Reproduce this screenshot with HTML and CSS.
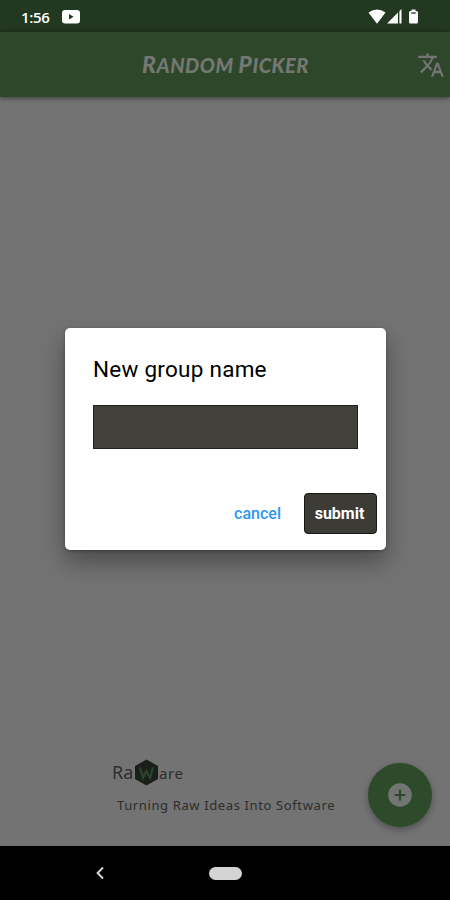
FILE: index.html
```html
<!DOCTYPE html>
<html lang="en">
<head>
    <meta charset="UTF-8">
    <meta name="viewport" content="width=device-width, initial-scale=1.0">
    <title>Random Picker</title>
    <link rel="stylesheet" href="styles.css">
</head>
<body>
    <div class="status-bar">
        <span class="clock">1:56</span>
        <svg class="video-icon" width="18" height="14" viewBox="0 0 18 14">
            <rect width="18" height="13.5" rx="3" fill="#fff"/>
            <path d="M7 4v5.4l4.6-2.7z" fill="#233820"/>
        </svg>
        <svg class="system-icons" width="54" height="18" viewBox="0 0 54 18" fill="#fff">
            <path d="M0.5 4.5Q9 -1.5 17.5 4.5L9 15.8z"/>
            <path d="M33.5 1v14.5H19z"/>
            <path d="M30.7 3v13" stroke="#233820" stroke-width="1.4"/>
            <path d="M43.5 1.5h4v1.4h1q1.5 0 1.5 1.5v9.7q0 1.5-1.5 1.5h-6q-1.5 0-1.5-1.5V4.4q0-1.5 1.5-1.5h1z"/>
            <path d="M43.2 5h4.6" stroke="#233820" stroke-width="1.3"/>
        </svg>
    </div>

    <div class="header">
        <h1 class="app-title"><span class="initial">R</span>andom <span class="initial">P</span>icker</h1>
        <!-- Language switch -->
        <svg class="translate-icon" width="28" height="28" viewBox="0 0 24 24" fill="#737573">
            <path d="M12.87 15.07l-2.54-2.51.03-.03c1.74-1.94 2.98-4.17 3.71-6.53H17V4h-7V2H8v2H1v1.99h11.17C11.5 7.92 10.44 9.75 9 11.35 8.07 10.32 7.3 9.19 6.69 8h-2c.73 1.63 1.73 3.17 2.98 4.56l-5.09 5.02L4 19l5-5 3.11 3.11.76-2.04zM18.5 10h-2L12 22h2l1.12-3h4.75L21 22h2l-4.5-12zm-2.62 7l1.62-4.33L19.12 17h-3.24z"/>
        </svg>
    </div>

    <div class="content">
        <div class="footer">
            <div class="brand">
                <span class="brand-start">Ra</span>
                <svg class="brand-mark" width="25" height="27" viewBox="0 0 25 27">
                    <path d="M12.500 0.500L24 7v13l-11.500 6.500L1 20V7z" fill="#1b1f1a"/>
                    <path d="M6 8.500l3 10.500 3.500-7 3.500 7 3-10.500" fill="none" stroke="#2a432e" stroke-width="2.200"/>
                </svg>
                <span class="brand-end">are</span>
            </div>
            <div class="tagline">Turning Raw Ideas Into Software</div>
        </div>
        <button class="add-button" aria-label="Add group">
            <svg width="24" height="24" viewBox="0 0 24 24">
                <circle cx="12" cy="12" r="11.800" fill="#737573"/>
                <path d="M12 6.500v11M6.500 12h11" stroke="#2d4b2a" stroke-width="2.200"/>
            </svg>
        </button>
    </div>

    <div class="nav-bar">
        <svg class="back-icon" width="8" height="14" viewBox="0 0 8 14">
            <path d="M7 1.500L1.600 7 7 12.500" fill="none" stroke="#d4d4d4" stroke-width="2"/>
        </svg>
        <div class="home-pill"></div>
    </div>

    <!-- New group dialog -->
    <div class="overlay">
        <div class="dialog">
            <h2 class="dialog-title">New group name</h2>
            <input class="group-input" type="text" aria-label="Group name">
            <div class="actions">
                <button class="cancel">cancel</button>
                <button class="submit">submit</button>
            </div>
        </div>
    </div>
</body>
</html>
```

FILE: styles.css
```css
* {
    box-sizing: border-box;
}

body {
    position: relative;
    margin: 0;
    height: 900px;
    display: flex;
    flex-direction: column;
    overflow: hidden;
    background: #737373;
    font-family: Roboto, sans-serif;
}

button {
    border: none;
    padding: 0;
    font-family: inherit;
}

/* Status Bar */
.status-bar {
    height: 32px;
    flex-shrink: 0;
    display: flex;
    align-items: center;
    padding: 2px 28px 0 21px;
    background: #233820;
    color: #fff;
}

.clock {
    width: 41px;
    font-family: "Open Sans", sans-serif;
    font-size: 15px;
    font-weight: 600;
    letter-spacing: -0.3px;
}

.system-icons {
    margin-left: auto;
}

/* Header */
.header {
    height: 65px;
    flex-shrink: 0;
    display: grid;
    grid-template-columns: 1fr auto 1fr;
    align-items: center;
    padding: 0 5px 0 6px;
    background: #2e472b;
    box-shadow: 0 1px 5px rgba(0, 0, 0, 0.5);
}

.app-title {
    grid-column: 2;
    margin: 0;
    color: #737873;
    font-family: Lato, sans-serif;
    font-size: 20px;
    font-style: italic;
    font-weight: 900;
    line-height: 28px;
    letter-spacing: 0.5px;
    text-transform: uppercase;
    white-space: nowrap;
}

.initial {
    font-size: 23px;
}

.translate-icon {
    justify-self: end;
}

/* Content */
.content {
    flex: 1;
    display: flex;
    justify-content: space-between;
    align-items: flex-end;
    padding: 0 18px 19px 112px;
}

.footer {
    padding-bottom: 12px;
    color: #2d2d2d;
    font-family: "Noto Sans", sans-serif;
}

.brand {
    display: flex;
    align-items: center;
    height: 28px;
}

.brand-start {
    width: 22px;
    font-size: 18px;
}

.brand-end {
    padding-top: 2px;
    font-size: 15px;
    letter-spacing: 0.6px;
}

.tagline {
    margin: 9px 0 0 5px;
    font-size: 13px;
    line-height: 20px;
    letter-spacing: 0.62px;
    white-space: nowrap;
}

.add-button {
    width: 64px;
    height: 64px;
    flex-shrink: 0;
    display: flex;
    justify-content: center;
    align-items: center;
    border-radius: 50%;
    background: #2d4b2a;
    box-shadow: 0 3px 7px rgba(0, 0, 0, 0.3);
}

/* Bottom Navigation */
.nav-bar {
    height: 54px;
    flex-shrink: 0;
    display: flex;
    align-items: center;
    padding-left: 96px;
    background: #000;
}

.home-pill {
    width: 33px;
    height: 13px;
    margin-left: 105px;
    border-radius: 7px;
    background: #d4d4d4;
}

/* Dialog */
.overlay {
    position: absolute;
    inset: 0;
    display: flex;
    justify-content: center;
    align-items: center;
    padding: 0 0 22px 1px;
}

.dialog {
    width: 321px;
    height: 222px;
    display: flex;
    flex-direction: column;
    padding: 27px 9px 16px 28px;
    border-radius: 5px;
    background: #fff;
    box-shadow: 0 12px 25px rgba(0, 0, 0, 0.35), 0 1px 3px rgba(0, 0, 0, 0.3);
}

.dialog-title {
    margin: 0 0 21px;
    font-size: 22.5px;
    font-weight: 400;
    line-height: 29px;
    letter-spacing: 0.25px;
}

.group-input {
    width: 265px;
    height: 44px;
    border: 1px solid #20201c;
    background: #42413c;
    color: #fff;
}

.actions {
    display: flex;
    justify-content: flex-end;
    align-items: center;
    gap: 23px;
    margin-top: auto;
}

.cancel {
    background: none;
    color: #2b97f3;
    font-size: 16px;
    font-weight: 500;
}

.submit {
    width: 73px;
    height: 41px;
    padding-right: 2px;
    border: 1px solid #171714;
    border-radius: 4px;
    background: #3c3b35;
    color: #fff;
    font-size: 16px;
    font-weight: 700;
}
```
